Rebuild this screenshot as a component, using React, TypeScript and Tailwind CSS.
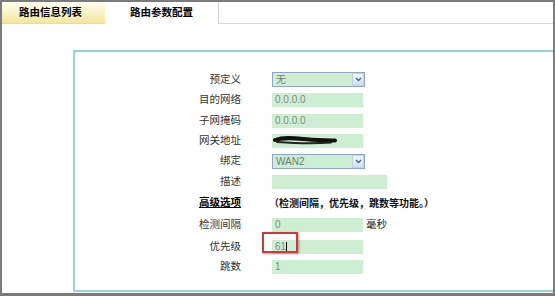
import React from "react";

const font = {
  fontFamily: '"Liberation Sans", "Noto Sans CJK SC", sans-serif',
};

function Field({ value, width = "w-[91px]" }: { value: string; width?: string }) {
  return (
    <div
      className={`${width} h-[14px] bg-[#cdeed3] text-[10px] leading-[14px] text-[#7f8f83] pl-[3px]`}
    >
      {value}
    </div>
  );
}

function Select({ value }: { value: string }) {
  return (
    <div className="w-[93px] h-[15px] border border-[#8fa8c8] bg-[#cdeed3] flex items-center">
      <span className="flex-1 pl-[3px] text-[10px] leading-[13px] text-[#6f7f72]">{value}</span>
      <span className="w-[12px] h-[13px] bg-gradient-to-b from-[#f2f6fc] to-[#d3def1] border border-[#c2d1ea] flex items-center justify-center">
        <svg width="7" height="5" viewBox="0 0 7 5">
          <path d="M1 1 L3.5 3.5 L6 1" stroke="#4a6698" strokeWidth="1.4" fill="none" />
        </svg>
      </span>
    </div>
  );
}

function Row({
  label,
  h,
  children,
  bold = false,
}: {
  label: string;
  h: string;
  children?: React.ReactNode;
  bold?: boolean;
}) {
  return (
    <div className={`flex items-center ${h}`}>
      <div
        className={`w-[166px] text-right text-[10.5px] ${
          bold ? "font-bold underline text-black" : "text-[#333]"
        }`}
      >
        {label}
      </div>
      <div className="pl-[31px] flex items-center">{children}</div>
    </div>
  );
}

export default function App() {
  return (
    <div
      style={font}
      className="w-[555px] h-[296px] bg-white border-t-2 border-l-2 border-r-2 border-b-[3px] border-[#7b7b7b] flex flex-col"
    >
      {/* tabs */}
      <div className="flex h-[22px] shrink-0">
        <div className="w-[103px] bg-gradient-to-b from-[#fffdf0] to-[#f4e69c] border-b border-[#d8d8d8] flex items-center justify-center text-[10.5px] font-bold text-black pr-[6px]">
          路由信息列表
        </div>
        <div className="w-[114px] bg-white border-r border-[#d0d0d0] flex items-center justify-center text-[10.5px] font-bold text-black">
          路由参数配置
        </div>
        <div className="flex-1 border-b border-[#d8d8d8]" />
      </div>

      {/* content */}
      <div className="flex-1 pl-[71px] pt-[26px] pb-[1px] flex">
        <div className="flex-1 border-2 border-r-0 border-[#94d6d6] pt-[17px]">
          <Row label="预定义" h="h-[21px]">
            <Select value="无" />
          </Row>
          <Row label="目的网络" h="h-[20px]">
            <Field value="0.0.0.0" />
          </Row>
          <Row label="子网掩码" h="h-[21px]">
            <Field value="0.0.0.0" />
          </Row>
          <Row label="网关地址" h="h-[20px]">
            <div className="relative">
              <Field value="" />
              <svg
                className="absolute left-[1px] top-[0px]"
                width="66"
                height="12"
                viewBox="0 0 66 12"
              >
                <path
                  d="M2 6 C10 3, 20 4, 30 5 S50 6, 62 6.5"
                  stroke="#111"
                  strokeWidth="4"
                  strokeLinecap="round"
                  fill="none"
                />
                <path
                  d="M4 8 C18 9, 40 10, 58 8.5"
                  stroke="#222"
                  strokeWidth="2"
                  strokeLinecap="round"
                  fill="none"
                />
              </svg>
            </div>
          </Row>
          <Row label="绑定" h="h-[20px]">
            <Select value="WAN2" />
          </Row>
          <Row label="描述" h="h-[21px]">
            <Field value="" width="w-[115px]" />
          </Row>
          <Row label="高级选项" h="h-[22px]" bold>
            <span className="text-[10px] font-bold text-[#111] ml-[-3px]">
              （检测间隔，优先级，跳数等功能。）
            </span>
          </Row>
          <Row label="检测间隔" h="h-[22px]">
            <Field value="0" />
            <span className="text-[10.5px] text-[#222] ml-[3px]">毫秒</span>
          </Row>
          <Row label="优先级" h="h-[21px]">
            <div className="relative">
              <Field value="61" />
              <span className="absolute left-[14px] top-[2px] w-px h-[10px] bg-black" />
              <div className="absolute left-[-10px] top-[-8px] w-[36px] h-[21px] border-2 border-[#d23a3a] shadow-[1px_1px_2px_rgba(0,0,0,0.35)]" />
            </div>
          </Row>
          <Row label="跳数" h="h-[20px]">
            <Field value="1" />
          </Row>
        </div>
      </div>
    </div>
  );
}
